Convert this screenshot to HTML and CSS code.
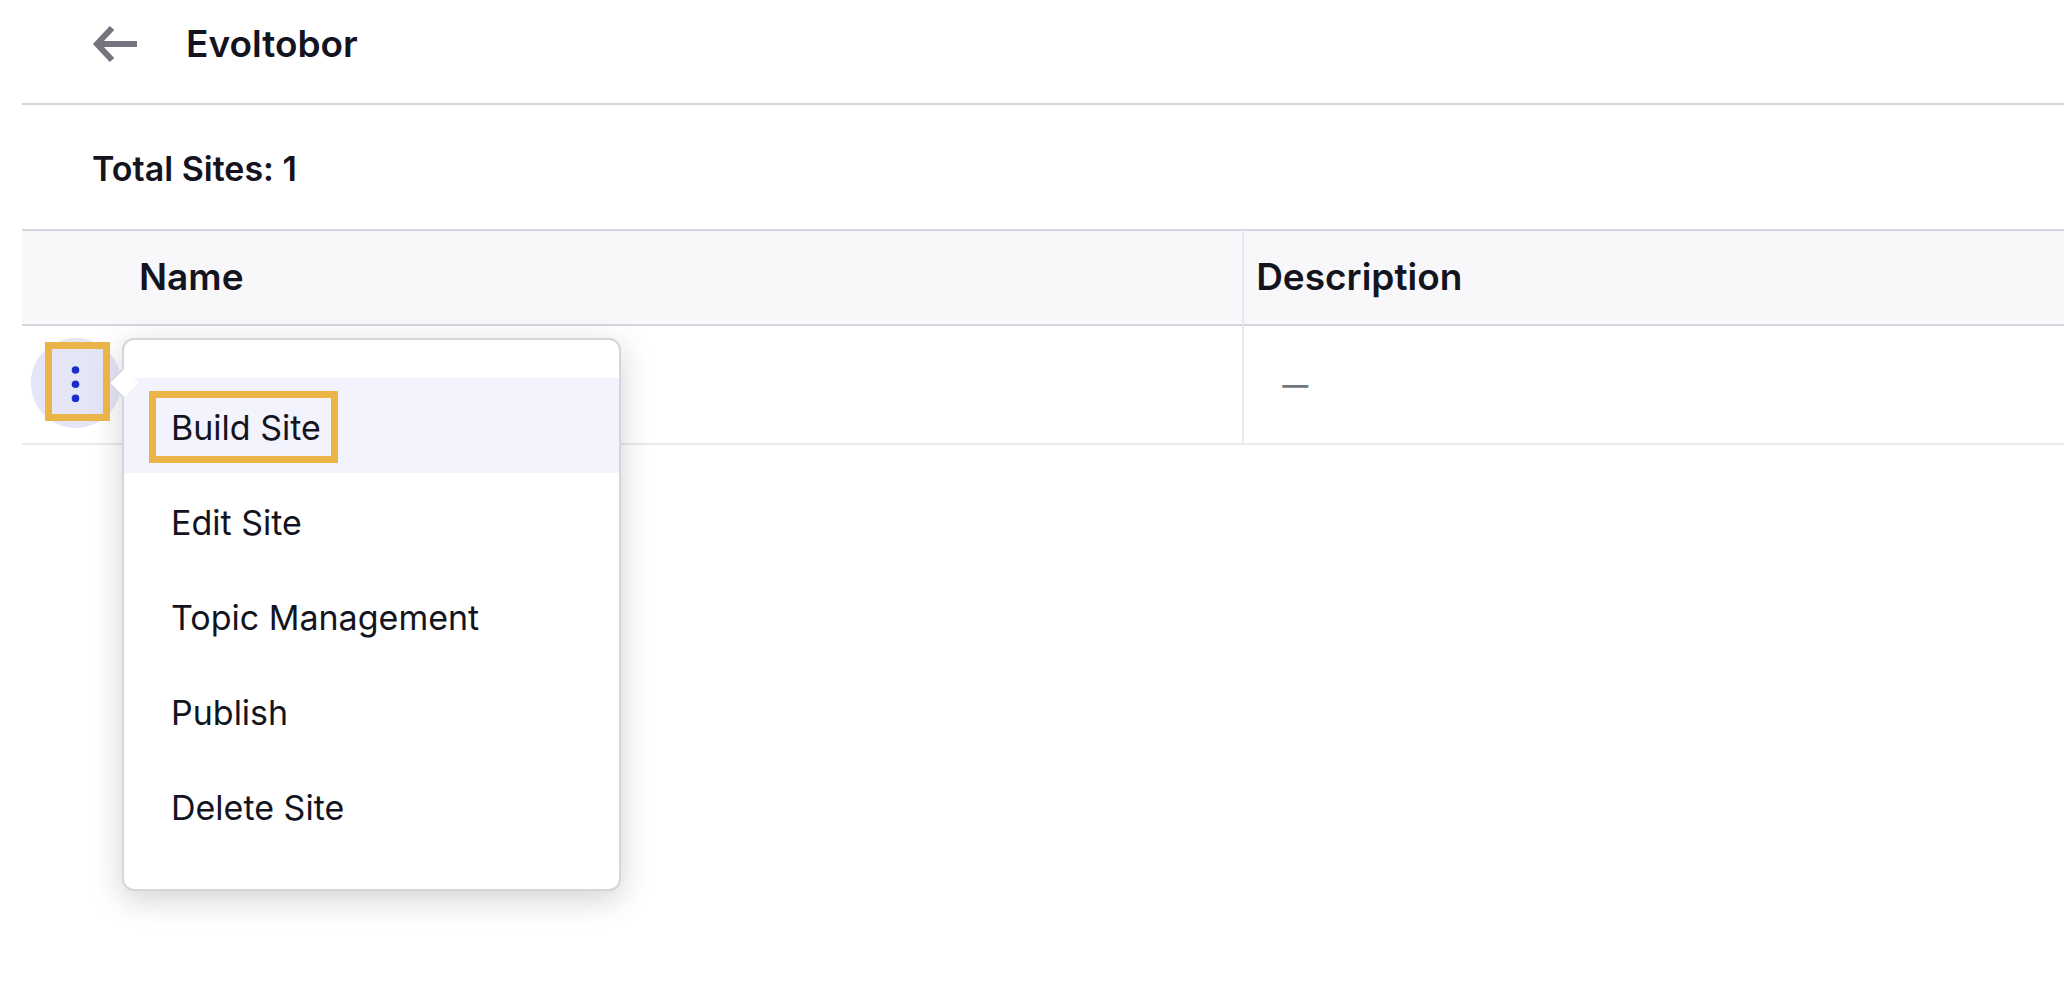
FILE: index.html
```html
<!DOCTYPE html>
<html lang="en">
<head>
  <meta charset="UTF-8">
  <meta name="viewport" content="width=device-width, initial-scale=1">
  <title>Evoltobor</title>
  <link rel="stylesheet" href="styles.css">
</head>
<body>

  <header class="page-header">
    <a class="back" href="#" aria-label="Back">
      <svg width="46" height="36" viewBox="0 0 46 36" fill="none" stroke="currentColor" stroke-width="6">
        <path d="M45 18H5M20 2L5 18L20 34"/>
      </svg>
    </a>
    <h1>Evoltobor</h1>
  </header>

  <h2 class="total">Total Sites: 1</h2>

  <table class="sites">
    <thead>
      <tr>
        <th class="name-col">Name</th>
        <th>Description</th>
      </tr>
    </thead>
    <tbody>
      <tr>
        <td class="name-col">
          <div class="actions">
            <button class="more" type="button" aria-label="Site actions" aria-expanded="true">
              <svg width="10" height="38" viewBox="0 0 10 38" fill="currentColor">
                <circle cx="4.5" cy="6" r="3.8"/>
                <circle cx="4.5" cy="20.2" r="3.8"/>
                <circle cx="4.5" cy="34.4" r="3.8"/>
              </svg>
            </button>
            <div class="menu">
              <button class="item active" type="button"><span class="mark">Build Site</span></button>
              <button class="item" type="button">Edit Site</button>
              <button class="item" type="button">Topic Management</button>
              <button class="item" type="button">Publish</button>
              <button class="item" type="button">Delete Site</button>
            </div>
          </div>
        </td>
        <td class="empty">—</td>
      </tr>
    </tbody>
  </table>

</body>
</html>
```
FILE: styles.css
```css
body {
  font-family: Inter, sans-serif;
  background-color: #fff;
  color: #14141f;
  margin: 0;
  padding-left: 22px;
  min-height: 100vh;
}

h1, h2 {
  margin: 0;
  font-weight: 600;
}

.page-header {
  display: flex;
  align-items: center;
  gap: 48px;
  padding: 20px 70px 35px;
  border-bottom: 2px solid #d5d5dd;
}

.page-header h1 {
  font-size: 37px;
  line-height: 48px;
}

.back {
  display: flex;
  color: #757580;
}

.total {
  font-size: 34px;
  line-height: 44px;
  padding: 42px 70px 38px;
}

.sites {
  width: 100%;
  table-layout: fixed;
  border-spacing: 0;
}

.sites th {
  background-color: #f8f8fb;
  border-top: 2px solid #d5d5dd;
  border-bottom: 2px solid #d5d5dd;
  font-size: 37px;
  font-weight: 600;
  line-height: 48px;
  text-align: left;
  padding: 22px 12px 23px;
}

.sites td {
  border-bottom: 2px solid #eaeaee;
  padding: 12px 9px 15px;
}

.sites .name-col {
  width: 59.85%;
  box-sizing: border-box;
  border-right: 2px solid #eaeaee;
}

.sites th.name-col {
  padding-left: 117px;
}

.sites td.empty {
  color: #757580;
  font-size: 26px;
  font-weight: 600;
  line-height: 44px;
  padding: 12px 38px;
}

.actions {
  position: relative;
  width: 90px;
}

.more {
  display: flex;
  align-items: center;
  justify-content: center;
  width: 90px;
  height: 90px;
  padding: 0;
  border: none;
  border-radius: 50%;
  background-color: #e4e5f7;
  color: #1c2bcb;
  cursor: pointer;
}

/* highlight frames */
.more::after,
.mark::after {
  content: "";
  position: absolute;
  border: 7px solid #ebb449;
  z-index: 2;
}

.more::after {
  inset: 4px 11px 7px 14px;
}

.mark {
  position: relative;
}

.mark::after {
  inset: -16px -17px -15px -22px;
}

.menu {
  position: absolute;
  top: 0;
  left: 91px;
  z-index: 1;
  box-sizing: border-box;
  width: 499px;
  padding: 38px 0 36px;
  border: 2px solid #d5d5dd;
  border-radius: 12px;
  background-color: #fff;
  box-shadow: 0 8px 32px rgba(0, 0, 0, 0.18);
}

/* pointer towards the button */
.menu::before {
  content: "";
  position: absolute;
  top: 32px;
  left: -12px;
  width: 20px;
  height: 20px;
  border: solid #d5d5dd;
  border-width: 0 0 2px 2px;
  background-color: #fff;
  transform: rotate(45deg);
}

.item {
  display: block;
  width: 100%;
  padding: 28px 47px 23px;
  border: none;
  background: none;
  color: inherit;
  font-family: inherit;
  font-size: 34px;
  line-height: 44px;
  text-align: left;
  cursor: pointer;
}

.item.active {
  background-color: #f3f3fd;
}
```
